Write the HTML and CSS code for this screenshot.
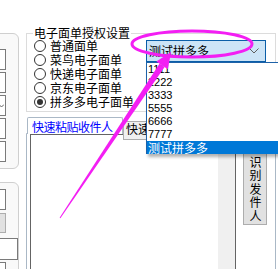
FILE: index.html
```html
<!DOCTYPE html>
<html lang="zh-CN">
<head>
  <meta charset="UTF-8">
  <title>电子面单授权设置</title>
  <link rel="stylesheet" href="styles.css">
</head>
<body>
  <div class="screen">
    <div class="side">
      <div class="side-group g1">
        <div class="tb"></div>
        <div class="tb"></div>
        <div class="tb combo-mini">
          <svg class="mini-arrow" width="5" height="4" viewBox="0 0 5 4">
            <polyline points="0,0.5 2.5,3 5,0.5" fill="none" stroke="#606060" stroke-width="1"/>
          </svg>
        </div>
        <div class="tb"></div>
        <div class="tb"></div>
      </div>
      <div class="side-group g2">
        <div class="tb"></div>
        <div class="tb grey-btn"></div>
        <div class="tb wide"></div>
        <div class="tb"></div>
      </div>
    </div>

    <div class="main">
      <fieldset class="auth">
        <legend>电子面单授权设置</legend>
        <div class="auth-body">
          <div class="radios">
            <label class="radio"><span class="circle"></span>普通面单</label>
            <label class="radio"><span class="circle"></span>菜鸟电子面单</label>
            <label class="radio"><span class="circle"></span>快递电子面单</label>
            <label class="radio"><span class="circle"></span>京东电子面单</label>
            <label class="radio checked"><span class="circle"></span>拼多多电子面单</label>
          </div>
          <div class="combo">
            <span class="combo-text">测试拼多多</span>
            <svg class="chevron" width="10" height="6" viewBox="0 0 10 6">
              <polyline points="0.5,0.5 5,5 9.5,0.5" fill="none" stroke="#606060" stroke-width="1"/>
            </svg>
          </div>
        </div>
      </fieldset>

      <div class="tabs">
        <div class="tab-row">
          <div class="tab active">快速粘贴收件人</div>
          <div class="tab">快速识别收件人</div>
        </div>
        <div class="tab-panel">
          <div class="memo">
            <div class="memo-text"></div>
            <div class="vscroll"></div>
          </div>
          <div class="btn-col">
            <div class="vbtn">识别发件人</div>
          </div>
        </div>
      </div>
    </div>
  </div>

  <!-- open dropdown of the combo -->
  <ul class="droplist">
    <li class="num">1111</li>
    <li class="num">2222</li>
    <li class="num">3333</li>
    <li class="num">5555</li>
    <li class="num">6666</li>
    <li class="num">7777</li>
    <li class="selected">测试拼多多</li>
  </ul>

  <!-- hand-drawn markup on top of the screenshot -->
  <svg class="marks" width="278" height="269" viewBox="0 0 278 269">
    <ellipse cx="192" cy="44" rx="60" ry="13" fill="none" stroke="#f31ef3" stroke-width="3"/>
    <polygon points="59.6,217.7 60.4,218.3 164.6,67 159.6,63.6" fill="#f31ef3"/>
    <polygon points="171,52 167.9,69.2 156.3,61.4" fill="#f31ef3"/>
  </svg>
</body>
</html>
```

FILE: styles.css
```css
body {
  margin: 0;
  width: 278px;
  height: 269px;
  overflow: hidden;
  position: relative;
  background: #ffffff;
  font-family: "Noto Sans CJK SC", "Liberation Sans", sans-serif;
  font-size: 12px;
  color: #000;
}
.screen {
  display: flex;
  padding-top: 26px;
}

/* left strip, cut off by the window edge */
.side {
  width: 18px;
  flex: none;
  padding-top: 7px;
}
.side-group {
  margin-left: -10px;
  width: 29px;
  box-sizing: border-box;
  border: 1px solid #cfcfcf;
  border-radius: 6px;
  background: #f9f9f9;
  display: flex;
  flex-direction: column;
  gap: 2px;
}
.g1 {
  height: 136px;
  padding-top: 15px;
}
.g2 {
  margin-top: 13px;
  height: 120px;
  padding-top: 6px;
}
.tb {
  width: 15px;
  height: 21px;
  box-sizing: border-box;
  border: 1px solid #7a7a7a;
  background: #fff;
}
.combo-mini {
  display: flex;
  justify-content: flex-end;
  align-items: center;
  padding-right: 1px;
}
.mini-arrow {
  display: block;
}
.grey-btn {
  height: 20px;
  background: #e1e1e1;
  border-color: #adadad;
  margin-top: 1px;
}
.wide {
  width: 27px;
  height: 22px;
  margin-top: 3px;
}

.main {
  margin-left: 8px;
  width: 250px;
  flex: none;
}

/* group box */
.auth {
  margin: 0;
  min-width: 0;
  border: 1px solid #dcdcdc;
  padding: 0 9px 1px 7px;
}
.auth legend {
  padding: 0 1px;
  margin-left: -1px;
  line-height: 14px;
  font-size: 12px;
}
.auth-body {
  display: flex;
  height: 70px;
}
.radios {
  width: 112px;
  margin-top: -1px;
}
.radio {
  display: flex;
  align-items: center;
  height: 14px;
  line-height: 14px;
  white-space: nowrap;
}
.circle {
  width: 12px;
  height: 12px;
  box-sizing: border-box;
  border: 1px solid #333;
  border-radius: 50%;
  background: #fff;
  margin-right: 4px;
  display: flex;
  align-items: center;
  justify-content: center;
}
.checked .circle::after {
  content: "";
  width: 6px;
  height: 6px;
  border-radius: 50%;
  background: #333;
}
.combo {
  width: 120px;
  height: 22px;
  box-sizing: border-box;
  border: 1px solid #0a5ea8;
  background: #cce4f7;
  display: flex;
  align-items: center;
  padding: 0 6px 0 2px;
}
.combo-text {
  flex: 1;
  line-height: 20px;
}
.chevron {
  display: block;
}

/* tab control */
.tabs {
  margin-top: 5px;
}
.tab-row {
  display: flex;
  height: 17px;
  position: relative;
  z-index: 1;
}
.tab {
  box-sizing: border-box;
  white-space: nowrap;
  overflow: hidden;
}
.tab.active {
  margin-left: 1px;
  width: 96px;
  height: 17px;
  border: 1px solid #aab8c6;
  border-bottom: 0;
  border-radius: 2px 2px 0 0;
  background: #fff;
  color: #0000ff;
  padding: 1px 0 0 4px;
  letter-spacing: -0.5px;
  line-height: 15px;
}
.tab:not(.active) {
  margin-top: 4px;
  width: 40px;
  height: 19px;
  border: 1px solid #adadad;
  background: #f0f0f0;
  padding: 0 0 0 2px;
  line-height: 14px;
}
.tab-panel {
  margin-top: -1px;
  height: 160px;
  box-sizing: border-box;
  border: 1px solid #aab8c6;
  border-top-color: #d0d7de;
  padding-left: 3px;
  display: flex;
  background: #fff;
}
.memo {
  width: 206px;
  height: 150px;
  box-sizing: border-box;
  border: 1px solid #646464;
  background: #fff;
  display: flex;
}
.memo-text {
  flex: 1;
}
.vscroll {
  width: 17px;
  background: #f0f0f0;
}
.btn-col {
  flex: 1;
}
.vbtn {
  margin: 16px 0 0 7px;
  width: 24px;
  height: 75px;
  box-sizing: border-box;
  border: 1px solid #adadad;
  background: #e1e1e1;
  writing-mode: vertical-rl;
  font-size: 12px;
  line-height: 22px;
  letter-spacing: 1.5px;
  padding-top: 5px;
}

/* dropdown of the combo */
.droplist {
  position: absolute;
  z-index: 5;
  left: 146px;
  top: 62px;
  width: 140px;
  margin: 0;
  padding: 0;
  list-style: none;
  background: #fff;
  border: 1px solid #1e62a8;
  border-bottom: 0;
  box-shadow: 2px 3px 3px rgba(0, 0, 0, 0.3);
}
.droplist li {
  height: 13px;
  line-height: 13px;
  padding-left: 1px;
  white-space: nowrap;
}
.droplist .num {
  font-family: "Liberation Sans", sans-serif;
  font-size: 11px;
}
.droplist .selected {
  background: #0078d7;
  color: #fff;
  font-size: 12px;
}

.marks {
  position: absolute;
  z-index: 6;
  left: 0;
  top: 0;
  pointer-events: none;
}
```
